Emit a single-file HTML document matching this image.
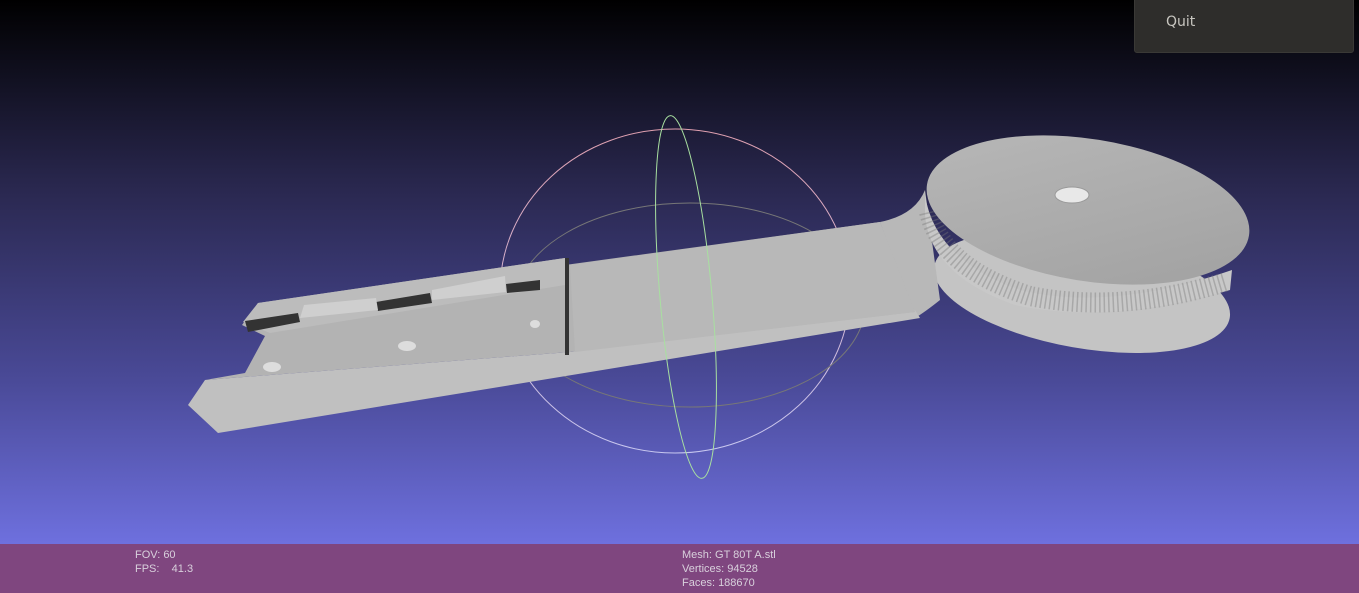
<!DOCTYPE html>
<html><head><style>
html,body{margin:0;padding:0;width:1359px;height:593px;overflow:hidden;font-family:"Liberation Sans",sans-serif}
#bg{position:absolute;left:0;top:0;width:1359px;height:544px;background:linear-gradient(#000 0%,#2a2850 35%,#4a4a98 70%,#6e70de 100%)}
#foot{position:absolute;left:0;top:544px;width:1359px;height:49px;background:#7f467f;color:#d8d0dc;font-size:11px;line-height:14px}
#quit{position:absolute;left:1134px;top:-4px;width:218px;height:55px;background:#2e2d2b;border-radius:3px;border:1px solid #3a3936}
#quit span{position:absolute;left:31px;top:17px;color:#c8c6c0;font-size:14px;font-family:"DejaVu Sans",sans-serif}
svg{position:absolute;left:0;top:0}
</style></head><body>
<div id="bg"></div>
<svg width="1359" height="544" viewBox="0 0 1359 544">
<defs>
<linearGradient id="ring" x1="0" y1="0" x2="0" y2="1"><stop offset="0" stop-color="#e0a0b0"/><stop offset="1" stop-color="#c8c8f0"/></linearGradient>
<linearGradient id="top" x1="0" y1="0" x2="1" y2="1"><stop offset="0" stop-color="#b8b8b8"/><stop offset="1" stop-color="#a0a0a0"/></linearGradient>
</defs>
<ellipse cx="675" cy="291" rx="175" ry="162" fill="none" stroke="url(#ring)" stroke-width="1"/>
<ellipse cx="690" cy="305" rx="175" ry="102" fill="none" stroke="#777" stroke-width="1"/>
<ellipse cx="1082" cy="292" rx="150" ry="56" transform="rotate(10 1082 292)" fill="#c4c4c4"/>
<path d="M880,222 Q915,215 925,190 L940,300 Q925,312 915,318 Z" fill="#b8b8b8"/>
<polygon points="188,405 218,433 920,318 915,310 570,352 205,380" fill="#c0c0c0"/>
<polygon points="205,380 245,373 265,336 242,325 258,303 565,258 565,265 880,222 915,312 570,352" fill="#b3b3b3"/>
<polygon points="570,265 575,352 915,312 880,222" fill="#b8b8b8"/>
<polygon points="243,322 258,303 565,258 565,285 270,333" fill="#bcbcbc"/>
<polygon points="245,321 298,313 300,322 248,332" fill="#333"/>
<polygon points="376,302 430,293 432,303 378,311" fill="#333"/>
<polygon points="506,284 540,280 540,290 507,293" fill="#333"/>
<polygon points="304,305 376,298 378,310 300,318" fill="#cfcfcf"/>
<polygon points="432,290 505,276 506,292 432,300" fill="#cfcfcf"/>
<rect x="565" y="258" width="4" height="97" fill="#333"/>
<ellipse cx="272" cy="367" rx="9" ry="5" fill="#ddd"/>
<ellipse cx="407" cy="346" rx="9" ry="5" fill="#ddd"/>
<ellipse cx="535" cy="324" rx="5" ry="4" fill="#ddd"/>
<path d="M925,195 Q935,260 1020,290 Q1110,312 1232,270 L1230,290 Q1110,325 1015,305 Q930,275 925,215 Z" fill="#c8c8c8"/>
<path d="M929,212 Q942,268 1030,296 Q1120,314 1225,282" fill="none" stroke="#777" stroke-width="20" stroke-dasharray="1.5 3" opacity="0.4"/>
<ellipse cx="1088" cy="210" rx="163" ry="71" transform="rotate(9 1088 210)" fill="url(#top)"/>
<ellipse cx="1072" cy="195" rx="17" ry="8" fill="#e8e8e8" stroke="#999"/>
<ellipse cx="686" cy="297" rx="26" ry="182" transform="rotate(-5 686 297)" fill="none" stroke="#a8e0a0" stroke-width="1"/>
</svg>
<div id="quit"><span>Quit</span></div>
<div id="foot">
<div style="position:absolute;left:135px;top:4px">FOV: 60<br>FPS:&nbsp;&nbsp;&nbsp;&nbsp;41.3</div>
<div style="position:absolute;left:682px;top:4px">Mesh: GT 80T A.stl<br>Vertices: 94528<br>Faces: 188670</div>
</div>
</body></html>
